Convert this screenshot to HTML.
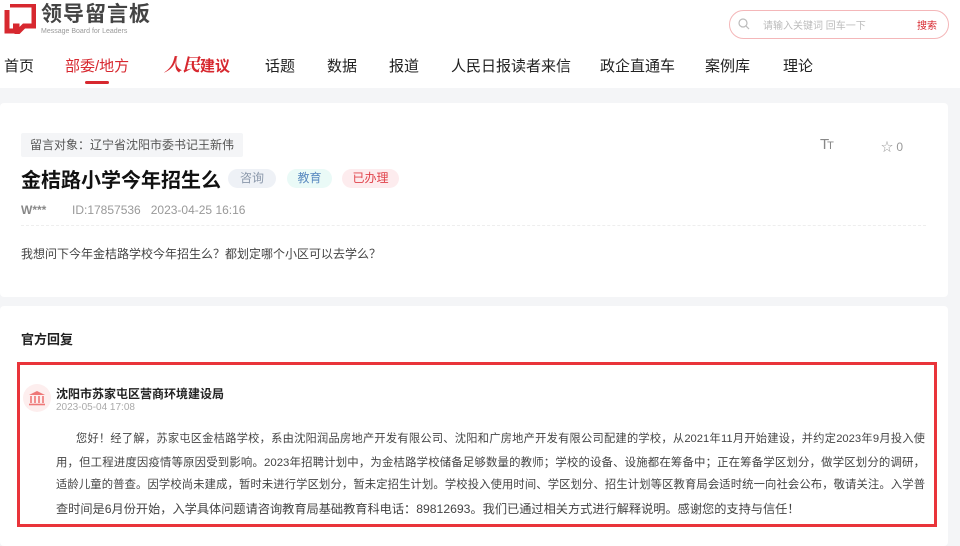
<!DOCTYPE html>
<html><head><meta charset="utf-8"><style>
*{margin:0;padding:0;box-sizing:border-box}
body{width:960px;height:540px;overflow:hidden;background:#f4f5f7;font-family:"Liberation Sans","Noto Sans CJK SC",sans-serif;color:#333;position:relative}
.hdr{position:absolute;left:0;top:0;width:960px;height:88px;background:#fff}
.abs{position:absolute;white-space:nowrap}
.nav{top:55px;font-size:15px;color:#222}
.card{position:absolute;left:0;width:948px;background:#fff;border-radius:4px}
.tag{position:absolute;top:169px;height:19px;line-height:19px;border-radius:10px;font-size:12px;text-align:center}
.ln{position:absolute;left:56px;width:869px;font-size:11.6px;color:#444;text-align:justify;text-align-last:justify;white-space:nowrap;overflow:hidden}
</style></head><body>
<div class="hdr"></div>
<svg class="abs" style="left:4px;top:4px" width="32" height="30" viewBox="0 0 32 30"><path d="M6 1H30V22H20L13 29V22H9" fill="none" stroke="#d7282f" stroke-width="5"/><path d="M3 6V27H12" fill="none" stroke="#d7282f" stroke-width="5"/></svg>
<div class="abs" style="left:41px;top:2px;font-size:21px;line-height:26px;font-weight:bold;color:#444;letter-spacing:1px">领导留言板</div>
<div class="abs" style="left:41px;top:28px;font-size:7px;line-height:8px;color:#999">Message Board for Leaders</div>
<div class="abs" style="left:729px;top:10px;width:220px;height:29px;border:1px solid #f4b7b9;border-radius:15px"></div>
<svg class="abs" style="left:738px;top:18px" width="12" height="12" viewBox="0 0 12 12"><circle cx="5" cy="5" r="4" fill="none" stroke="#bbb" stroke-width="1.2"/><path d="M8 8L11 11" stroke="#bbb" stroke-width="1.2"/></svg>
<div class="abs" style="left:763px;top:17px;font-size:10px;color:#bbb">请输入关键词 回车一下</div>
<div class="abs" style="left:917px;top:17px;font-size:10px;color:#d7282f">搜索</div>
<div class="abs nav" style="left:4px">首页</div>
<div class="abs nav" style="left:65px;color:#d7282f">部委/地方</div>
<div class="abs" style="left:85px;top:81px;width:24px;height:3px;background:#d7282f;border-radius:2px"></div>
<div class="abs nav" style="left:164px;top:51px;color:#d7282f;font-size:18px;font-weight:bold;font-style:italic;font-family:'Noto Serif CJK SC',serif">人民<span style="font-size:15px;font-style:normal;font-family:'Liberation Sans','Noto Sans CJK SC',sans-serif">建议</span></div>
<div class="abs nav" style="left:265px">话题</div>
<div class="abs nav" style="left:327px">数据</div>
<div class="abs nav" style="left:389px">报道</div>
<div class="abs nav" style="left:451px">人民日报读者来信</div>
<div class="abs nav" style="left:600px">政企直通车</div>
<div class="abs nav" style="left:705px">案例库</div>
<div class="abs nav" style="left:783px">理论</div>
<div class="card" style="top:103px;height:194px"></div>
<div class="abs" style="left:21px;top:133px;height:24px;line-height:24px;padding:0 9px;background:#f4f5f7;font-size:12px;color:#555;border-radius:2px">留言对象：辽宁省沈阳市委书记王新伟</div>
<div class="abs" style="left:21px;top:164px;font-size:20px;font-weight:bold;color:#111">金桔路小学今年招生么</div>
<div class="tag" style="left:228px;width:48px;background:#eef1f6;color:#8a97aa">咨询</div>
<div class="tag" style="left:287px;width:45px;background:#eafaf7;color:#5a8ac0">教育</div>
<div class="tag" style="left:342px;width:57px;background:#fdecee;color:#e0434b">已办理</div>
<div class="abs" style="left:21px;top:203px;font-size:12px;font-weight:bold;color:#888">W***</div>
<div class="abs" style="left:72px;top:203px;font-size:12px;color:#999">ID:17857536&nbsp;&nbsp;&nbsp;2023-04-25 16:16</div>
<div class="abs" style="left:21px;top:225px;width:905px;border-top:1px dashed #eee"></div>
<div class="abs" style="left:21px;top:245px;font-size:12px;color:#444">我想问下今年金桔路学校今年招生么？都划定哪个小区可以去学么？</div>
<div class="abs" style="left:820px;top:136px;font-size:15px;color:#888;letter-spacing:-2px">T<span style="font-size:11px">T</span></div>
<div class="abs" style="left:881px;top:138px;font-size:12px;color:#999">☆ 0</div>
<div class="card" style="top:306px;height:240px"></div>
<div class="abs" style="left:21px;top:329px;font-size:13px;font-weight:bold;color:#222">官方回复</div>
<div class="abs" style="left:17px;top:362px;width:920px;height:165px;border:3px solid #e9343a"></div>
<div class="abs" style="left:23px;top:384px;width:28px;height:28px;border-radius:50%;background:#fdeeee"></div>
<svg class="abs" style="left:28px;top:390px" width="18" height="16" viewBox="0 0 18 16"><path d="M1 5L9 1L17 5Z" fill="#e77"/><path d="M3 6V13M7 6V13M11 6V13M15 6V13" stroke="#e77" stroke-width="1.6"/><path d="M1 14.5H17" stroke="#e77" stroke-width="1.6"/></svg>
<div class="abs" style="left:56px;top:385px;font-size:12px;font-weight:bold;color:#222">沈阳市苏家屯区营商环境建设局</div>
<div class="abs" style="left:56px;top:402px;font-size:10px;color:#aaa">2023-05-04 17:08</div>
<div class="ln" style="top:430px;padding-left:20px;font-size:11.2px">您好！经了解，苏家屯区金桔路学校，系由沈阳润品房地产开发有限公司、沈阳和广房地产开发有限公司配建的学校，从2021年11月开始建设，并约定2023年9月投入使</div>
<div class="ln" style="top:454px;font-size:11.4px">用，但工程进度因疫情等原因受到影响。2023年招聘计划中，为金桔路学校储备足够数量的教师；学校的设备、设施都在筹备中；正在筹备学区划分，做学区划分的调研，</div>
<div class="ln" style="top:476px;font-size:11.3px">适龄儿童的普查。因学校尚未建成，暂时未进行学区划分，暂未定招生计划。学校投入使用时间、学区划分、招生计划等区教育局会适时统一向社会公布，敬请关注。入学普</div>
<div class="ln" style="top:499px;text-align-last:left;font-size:12.2px">查时间是6月份开始，入学具体问题请咨询教育局基础教育科电话：89812693。我们已通过相关方式进行解释说明。感谢您的支持与信任！</div>
</body></html>
